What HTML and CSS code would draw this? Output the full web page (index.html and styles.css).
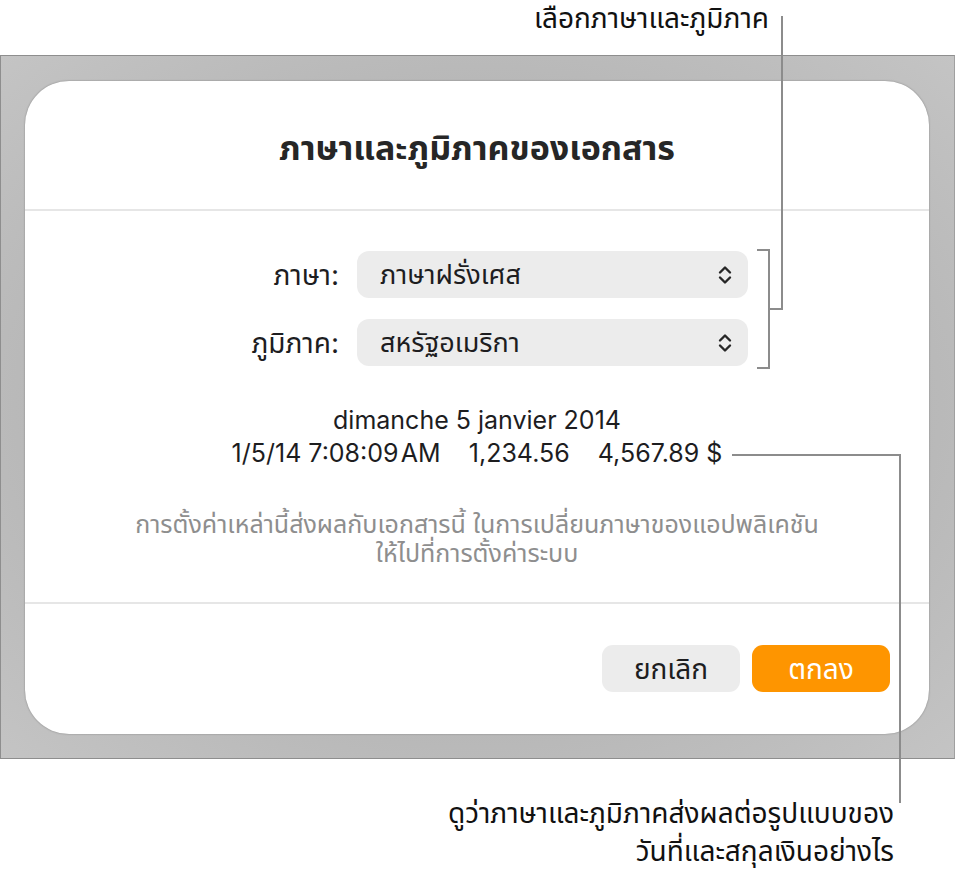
FILE: index.html
```html
<!DOCTYPE html>
<html lang="th">
<head>
    <meta charset="UTF-8">
    <meta name="viewport" content="width=device-width, initial-scale=1.0">
    <title>ภาษาและภูมิภาคของเอกสาร</title>
    <link rel="stylesheet" href="styles.css">
</head>
<body>
    <div class="page">
        <p class="callout callout-top">เลือกภาษาและภูมิภาค</p>

        <div class="backdrop">
            <div class="dialog">
                <div class="dialog-header">
                    <h1>ภาษาและภูมิภาคของเอกสาร</h1>
                </div>

                <div class="dialog-body">
                    <div class="form">
                        <div class="form-row">
                            <span class="label">ภาษา:</span>
                            <div class="popup">
                                <span>ภาษาฝรั่งเศส</span>
                                <svg class="chevrons" width="16" height="22" viewBox="0 0 16 22"><path d="M3 8.5 8 3.5l5 5M3 13.5 8 18.5l5-5" fill="none" stroke="#262626" stroke-width="2.4" stroke-linecap="round" stroke-linejoin="round"/></svg>
                            </div>
                        </div>
                        <div class="form-row">
                            <span class="label">ภูมิภาค:</span>
                            <div class="popup">
                                <span>สหรัฐอเมริกา</span>
                                <svg class="chevrons" width="16" height="22" viewBox="0 0 16 22"><path d="M3 8.5 8 3.5l5 5M3 13.5 8 18.5l5-5" fill="none" stroke="#262626" stroke-width="2.4" stroke-linecap="round" stroke-linejoin="round"/></svg>
                            </div>
                        </div>
                    </div>

                    <div class="sample">
                        <div>dimanche 5 janvier 2014</div>
                        <div>1/5/14 7:08:09&#8202;AM&nbsp;&nbsp;&nbsp;&nbsp;1,234.56&nbsp;&nbsp;&nbsp;&nbsp;4,567.89 $</div>
                    </div>

                    <p class="note">การตั้งค่าเหล่านี้ส่งผลกับเอกสารนี้ ในการเปลี่ยนภาษาของแอปพลิเคชัน<br>ให้ไปที่การตั้งค่าระบบ</p>
                </div>

                <div class="dialog-footer">
                    <button class="btn">ยกเลิก</button>
                    <button class="btn btn-primary">ตกลง</button>
                </div>
            </div>
        </div>

        <p class="callout callout-bottom">ดูว่าภาษาและภูมิภาคส่งผลต่อรูปแบบของ<br>วันที่และสกุลเงินอย่างไร</p>

        <!-- leader lines for the two notes -->
        <svg class="leaders" width="955" height="891" viewBox="0 0 955 891">
            <g fill="none" stroke="#8c8c8c" stroke-width="2">
                <path d="M757 250H769V368H757"/>
                <path d="M769 309H782V16"/>
                <path d="M732 455H900V803"/>
            </g>
        </svg>
    </div>
</body>
</html>
```

FILE: styles.css
```css
body {
    margin: 0;
    background: #fff;
    font-family: "Inter", "Noto Sans", "Noto Sans Thai", sans-serif;
    color: #1d1d1f;
}
.page {
    position: relative;
    width: 955px;
    height: 891px;
}
.callout {
    margin: 0;
    font-size: 28px;
    line-height: 38px;
    color: #111;
}
.callout-top {
    height: 55px;
    padding-right: 186px;
    text-align: right;
    line-height: 36px;
}
.callout-bottom {
    padding: 35px 61px 0 0;
    text-align: right;
}
.leaders {
    position: absolute;
    left: 0;
    top: 0;
    pointer-events: none;
}

.backdrop {
    box-sizing: border-box;
    width: 955px;
    height: 704px;
    padding: 25px 25px 24px 24px;
    border: 1px solid #8e8e8e;
    border-right-color: #a0a0a0;
    background: radial-gradient(ellipse at center, #b2b2b2 0%, #b6b6b6 60%, #c4c4c4 100%);
}
.dialog {
    display: flex;
    flex-direction: column;
    height: 100%;
    background: #fff;
    border-radius: 44px;
    box-shadow: 0 0 2px rgba(0,0,0,0.35);
}
.dialog-header {
    height: 128px;
    border-bottom: 2px solid #e6e6e6;
    display: flex;
    align-items: center;
    justify-content: center;
}
.dialog-header h1 {
    margin: 6px 0 0;
    font-size: 34px;
    line-height: 40px;
    font-weight: 700;
    color: #262626;
}
.dialog-body {
    height: 393px;
    border-bottom: 2px solid #e6e6e6;
    padding-top: 40px;
    box-sizing: border-box;
}
.form {
    display: flex;
    flex-direction: column;
    gap: 21px;
    padding-left: 114px;
}
.form-row {
    display: flex;
    align-items: center;
    gap: 18px;
}
.label {
    width: 200px;
    text-align: right;
    font-size: 28px;
    line-height: 34px;
    color: #1d1d1f;
}
.popup {
    box-sizing: border-box;
    width: 391px;
    height: 47px;
    padding: 0 15px 0 23px;
    display: flex;
    align-items: center;
    justify-content: space-between;
    background: #ececec;
    border-radius: 12px;
    font-size: 27px;
    line-height: 34px;
}
.sample {
    margin-top: 38px;
    text-align: center;
    font-size: 25px;
    line-height: 33px;
    color: #1d1d1f;
}
.note {
    margin: 40px 0 0;
    text-align: center;
    font-size: 25px;
    line-height: 29px;
    color: #8e8e8e;
}
.dialog-footer {
    flex: 1;
    display: flex;
    justify-content: flex-end;
    align-items: flex-start;
    gap: 12px;
    padding: 41px 39px 0 0;
}
.btn {
    width: 138px;
    height: 47px;
    border: none;
    border-radius: 11px;
    background: #ececec;
    font-family: inherit;
    font-size: 28px;
    line-height: 34px;
    color: #1d1d1f;
}
.btn-primary {
    background: #fe9500;
    color: #fff;
}
```
